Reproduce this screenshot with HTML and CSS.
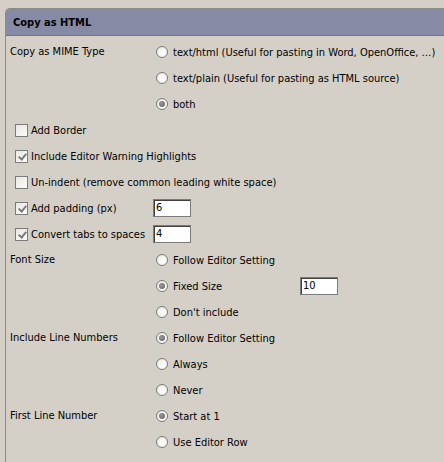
FILE: index.html
```html
<!DOCTYPE html>
<html>
<head>
<meta charset="utf-8">
<link rel="stylesheet" href="styles.css">
</head>
<body>
<div class="panel">
  <div class="header">Copy as HTML</div>
  <div class="body">
    <div class="group">
      <div class="glabel">Copy as MIME Type</div>
      <div class="opts">
        <div class="row"><span class="radio"></span><span class="txt">text/html (Useful for pasting in Word, OpenOffice, …)</span></div>
        <div class="row"><span class="radio"></span><span class="txt">text/plain (Useful for pasting as HTML source)</span></div>
        <div class="row"><span class="radio on"></span><span class="txt">both</span></div>
      </div>
    </div>
    <div class="row crow"><span class="check"></span><span class="txt">Add Border</span></div>
    <div class="row crow"><span class="check on"></span><span class="txt">Include Editor Warning Highlights</span></div>
    <div class="row crow"><span class="check"></span><span class="txt">Un-indent (remove common leading white space)</span></div>
    <div class="row crow"><span class="check on"></span><span class="txt clabel">Add padding (px)</span><span class="field">6</span></div>
    <div class="row crow"><span class="check on"></span><span class="txt clabel">Convert tabs to spaces</span><span class="field">4</span></div>
    <div class="group">
      <div class="glabel">Font Size</div>
      <div class="opts">
        <div class="row"><span class="radio"></span><span class="txt">Follow Editor Setting</span></div>
        <div class="row"><span class="radio on"></span><span class="txt rlabel">Fixed Size</span><span class="field">10</span></div>
        <div class="row"><span class="radio"></span><span class="txt">Don't include</span></div>
      </div>
    </div>
    <div class="group">
      <div class="glabel">Include Line Numbers</div>
      <div class="opts">
        <div class="row"><span class="radio on"></span><span class="txt">Follow Editor Setting</span></div>
        <div class="row"><span class="radio"></span><span class="txt">Always</span></div>
        <div class="row"><span class="radio"></span><span class="txt">Never</span></div>
      </div>
    </div>
    <div class="group">
      <div class="glabel">First Line Number</div>
      <div class="opts">
        <div class="row"><span class="radio on"></span><span class="txt">Start at 1</span></div>
        <div class="row"><span class="radio"></span><span class="txt">Use Editor Row</span></div>
      </div>
    </div>
  </div>
</div>
</body>
</html>
```
FILE: styles.css
```css
html, body {
  margin: 0;
  padding: 0;
  background: #d4d0c8;
  width: 444px;
  height: 462px;
  overflow: hidden;
}
body {
  font-family: "DejaVu Sans Condensed", "DejaVu Sans", sans-serif;
  font-size: 11px;
  color: #000;
  padding: 8px 0 0 5px;
  box-sizing: border-box;
}
.panel {
  width: 460px;
  height: 470px;
  border-left: 1px solid #8d8b86;
  border-top: 1px solid #8d8b86;
  border-top-left-radius: 5px;
  box-sizing: border-box;
}
.header {
  height: 27px;
  background: #868aa5;
  border-bottom: 1px solid #6e7188;
  border-top-left-radius: 4px;
  box-sizing: border-box;
  font-weight: bold;
  padding-left: 7px;
  line-height: 27px;
}
.body {
  padding-top: 3px;
}
.group {
  display: grid;
  grid-template-columns: 150px 1fr;
}
.glabel {
  padding-left: 4px;
  height: 26px;
  line-height: 26px;
}
.row {
  height: 26px;
  display: flex;
  align-items: center;
}
.crow {
  padding-left: 9px;
}
.txt {
  white-space: nowrap;
}
.radio {
  width: 12px;
  height: 12px;
  border-radius: 50%;
  box-sizing: border-box;
  border: 1px solid #7b7b7b;
  background: radial-gradient(circle at 60% 60%, #ffffff 0%, #f4f3ef 55%, #dcdad4 100%);
  margin-right: 5px;
  flex: none;
  position: relative;
}
.radio.on::after {
  content: "";
  position: absolute;
  left: 2px;
  top: 2px;
  width: 6px;
  height: 6px;
  border-radius: 50%;
  background: radial-gradient(circle at 40% 40%, #9a9a9a, #5c5c5c);
}
.check {
  width: 13px;
  height: 13px;
  box-sizing: border-box;
  border: 1px solid #7b7b7b;
  background: linear-gradient(135deg, #e9e8e3, #fbfbf9);
  margin-right: 3px;
  flex: none;
  position: relative;
}
.check.on::after {
  content: "";
  position: absolute;
  left: 4px;
  top: 1px;
  width: 3px;
  height: 6px;
  border-right: 2px solid #7a7a7a;
  border-bottom: 2px solid #7a7a7a;
  transform: rotate(40deg);
}
.clabel {
  width: 122px;
}
.rlabel {
  width: 127px;
}
.field {
  width: 38px;
  height: 18px;
  box-sizing: border-box;
  background: #fff;
  border: 1px solid #7b7b7b;
  box-shadow: inset 1px 1px 0 #404040;
  padding-left: 2px;
  line-height: 16px;
  flex: none;
}
```
